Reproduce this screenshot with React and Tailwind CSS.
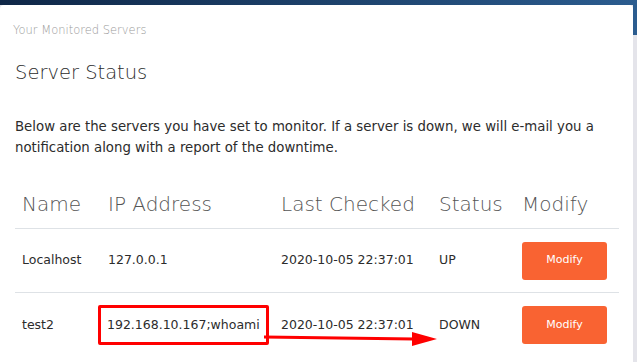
import React from 'react';

const servers = [
  { name: 'Localhost', ip: '127.0.0.1', checked: '2020-10-05 22:37:01', status: 'UP' },
  { name: 'test2', ip: '192.168.10.167;whoami', checked: '2020-10-05 22:37:01', status: 'DOWN', flagged: true },
];

const cols = 'grid grid-cols-[86px_173px_158px_83px_104px]';

function App() {
  return (
    <div className="w-[637px] h-[362px] overflow-hidden bg-[#e4e4ea] font-['DejaVu_Sans',sans-serif]">
      <div className="h-[5px] bg-gradient-to-r from-[#0f2747] to-[#2b5c8f]" />
      <div className="flex">
        <div className="relative w-[633px] h-[357px] bg-white rounded-t-[4px] px-[15px] pt-[16px]">
          <p className="-ml-[2px] text-[11.5px] text-[#9a9a9a] font-light leading-[18px]">Your Monitored Servers</p>
          <h2 className="mt-[20px] text-[19.5px] text-[#2c2c2c] font-light leading-[28px]">Server Status</h2>
          <p className="mt-[29px] text-[13.3px] text-[#2c2c2c] leading-[21px] w-[615px]">
            Below are the servers you have set to monitor. If a server is down, we will e-mail you a notification along with a report of the downtime.
          </p>

          <div className="mt-[22px] w-[604px]">
            <div className={`${cols} h-[49px] items-center border-b border-[#dee2e6] text-[20px] font-light text-[#555]`}>
              <span className="pl-[7px]">Name</span>
              <span className="pl-[7px]">IP Address</span>
              <span className="pl-[7px]">Last Checked</span>
              <span className="pl-[7px]">Status</span>
              <span className="pl-[7px]">Modify</span>
            </div>
            {servers.map((s) => (
              <div key={s.name} className={`${cols} h-[64px] items-center border-b border-[#dee2e6] last:border-b-0 text-[12.5px] text-[#2c2c2c]`}>
                <span className="pl-[7px]">{s.name}</span>
                <span className="pl-[7px]">
                  {s.flagged ? (
                    <span className="-ml-[10px] inline-block border-[3px] border-[#f00] rounded-[2px] px-[6px] py-[8px]">{s.ip}</span>
                  ) : s.ip}
                </span>
                <span className="pl-[7px]">{s.checked}</span>
                <span className="pl-[7px]">{s.status}</span>
                <span className="pl-[7px]">
                  <button className="w-[85px] h-[38px] rounded-[3px] bg-[#f96332] text-white text-[11px]">Modify</button>
                </span>
              </div>
            ))}
          </div>

          <svg className="absolute left-[262px] top-[323px]" width="180" height="30" viewBox="0 0 180 30">
            <line x1="2" y1="9" x2="152" y2="11" stroke="#f00" strokeWidth="3" />
            <polygon points="150,4 175,11 150,18" fill="#f00" />
          </svg>
        </div>
        <div className="w-[4px] h-[30px] bg-[#2b5c8f]" />
      </div>
    </div>
  );
}

export default App;
